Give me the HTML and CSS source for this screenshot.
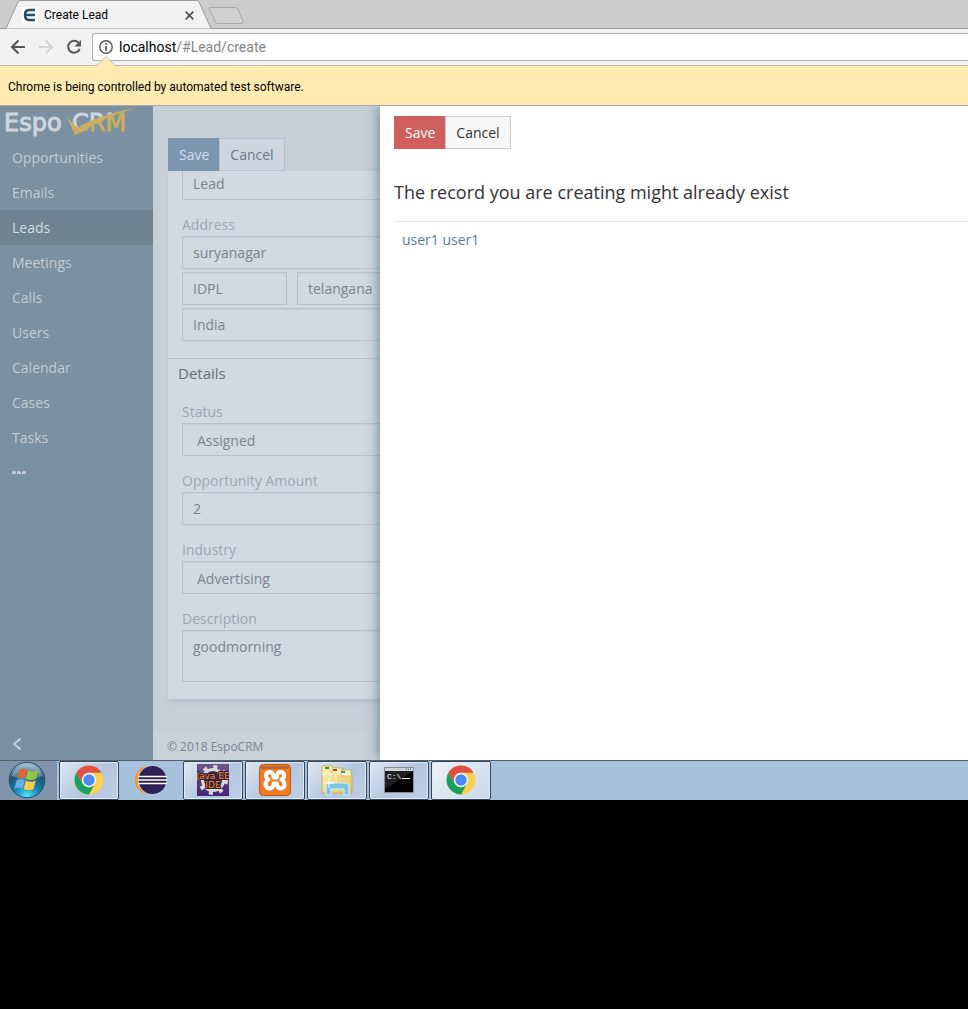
FILE: index.html
```html
<!DOCTYPE html>
<html lang="en">
<head>
<meta charset="utf-8">
<title>Create Lead</title>
<link rel="stylesheet" href="styles.css">
</head>
<body>
<svg class="defs" width="0" height="0" aria-hidden="true">
  <defs>
    <radialGradient id="orb" cx=".5" cy=".95" r=".95"><stop offset="0" stop-color="#4de5fa"/><stop offset=".35" stop-color="#1687b8"/><stop offset=".7" stop-color="#225071"/><stop offset="1" stop-color="#a9c2d4"/></radialGradient>
    <linearGradient id="folder" x1="0" y1="0" x2="1" y2="1"><stop offset="0" stop-color="#fff4bd"/><stop offset="1" stop-color="#e2c05c"/></linearGradient>
    <linearGradient id="purple" x1="0" y1="0" x2="0" y2="1"><stop offset="0" stop-color="#6e5585"/><stop offset="1" stop-color="#432777"/></linearGradient>
    <clipPath id="above-check"><path d="M72 0H132V1Q100 10 78 22L72 18Z"/></clipPath>
    <clipPath id="below-check"><path d="M82 26Q102 11 132 2V32H82Z"/></clipPath>
    <symbol id="chrome" viewBox="0 0 30 30">
      <circle cx="15" cy="15" r="14.5" fill="#fdd150"/>
      <path d="M2.4 7.8A14.5 14.5 0 0 1 27.6 7.8H15A7.2 7.2 0 0 0 8.8 18.6Z" fill="#df5144"/>
      <path d="M2.4 7.8A14.5 14.5 0 0 0 15 29.5L21.2 18.6A7.2 7.2 0 0 1 8.8 18.6Z" fill="#1ba05f"/>
      <circle cx="15" cy="15" r="7.2" fill="#f4f6f9"/><circle cx="15" cy="15" r="5.7" fill="#4a89f3"/>
    </symbol>
  </defs>
</svg>

<div class="browser">
  <div class="tabs">
    <svg class="tab-shape" width="250" height="29" viewBox="0 0 250 29" aria-hidden="true">
      <path d="M0 28.5H6L18 2Q19 .5 21 .5H196Q198 .5 199 2L211 28.5H250" fill="#f2f2f2" stroke="#9b9b9b"/>
      <path d="M210 7.500H235Q237 7.500 238 9L243 21Q244 23.500 241 23.500H218Q216 23.500 215 21L209 9Q208.500 7.500 210 7.500Z" fill="#d0d0d0" stroke="#a5a5a5"/>
    </svg>
    <div class="tab">
      <svg width="16" height="16" viewBox="0 0 16 16" aria-hidden="true"><path fill="#fff" d="M0 0h16v16H0z"/><path d="M13 3H7Q3 3 3 8T7 13H13M4 8H13" fill="none" stroke="#234e70" stroke-width="2.500"/></svg>
      <span class="tab-title">Create Lead</span>
      <button class="plain" aria-label="Close tab"><svg width="9" height="9" viewBox="0 0 9 9"><path d="M.7.7l7.600 7.600M8.300.7L.7 8.300" stroke="#505050" stroke-width="1.700"/></svg></button>
    </div>
  </div>
  <div class="toolbar">
    <button class="plain" aria-label="Back"><svg width="16" height="16" viewBox="0 0 16 16"><path d="M15 8H2M8.500 1.500L2 8l6.500 6.500" fill="none" stroke="#555" stroke-width="2"/></svg></button>
    <button class="plain" aria-label="Forward"><svg width="16" height="16" viewBox="0 0 16 16"><path d="M1 8h13M7.500 1.500L14 8l-6.500 6.500" fill="none" stroke="#d3d3d3" stroke-width="2"/></svg></button>
    <button class="plain" aria-label="Reload"><svg width="16" height="16" viewBox="0 0 16 16"><path d="M12.600 3.700A6 6 0 1 0 13.700 10" fill="none" stroke="#555" stroke-width="2"/><path d="M15 1v6.500H8.500z" fill="#555"/></svg></button>
    <div class="address">
      <svg width="14" height="14" viewBox="0 0 14 14" aria-hidden="true"><circle cx="7" cy="7" r="6.200" fill="none" stroke="#555" stroke-width="1.400"/><path d="M7 6v5M7 3v1.800" stroke="#555" stroke-width="1.700"/></svg>
      <span>localhost<span class="path">/#Lead/create</span></span>
    </div>
  </div>
  <div class="infobar">
    <svg class="notch" width="20" height="11" viewBox="0 0 20 11" aria-hidden="true"><path d="M0 10.500L10 .5l10 10V11H0z" fill="#ffebb1"/><path d="M0 10.500L10 .5l10 10" fill="none" stroke="#c9bd9c"/></svg>
    Chrome is being controlled by automated test software.
  </div>

  <div class="app">
    <nav class="sidebar">
      <svg class="logo" width="130" height="32" viewBox="0 0 130 32" role="img" aria-label="EspoCRM">
        <text x="4" y="25" class="logo-text light">Espo</text>
        <g clip-path="url(#above-check)"><text x="72" y="25" class="logo-text light">CRM</text></g>
        <g clip-path="url(#below-check)"><text x="72" y="25" class="logo-text gold">CRM</text></g>
        <path d="M67 11L75 29L80 27Q102 12 135 2Q98 9 77 22Z" fill="#cbae60"/>
      </svg>
      <ul>
        <li><a href="#">Opportunities</a></li>
        <li><a href="#">Emails</a></li>
        <li><a href="#" class="active">Leads</a></li>
        <li><a href="#">Meetings</a></li>
        <li><a href="#">Calls</a></li>
        <li><a href="#">Users</a></li>
        <li><a href="#">Calendar</a></li>
        <li><a href="#">Cases</a></li>
        <li><a href="#">Tasks</a></li>
        <li><a href="#" aria-label="More"><svg width="14" height="4" viewBox="0 0 14 4"><path d="M1 0h2l1 1v2H0V1zM6 0h2l1 1v2H5V1zM11 0h2l1 1v2h-4V1z" fill="#c2ccd5"/></svg></a></li>
      </ul>
      <button class="plain collapse" aria-label="Collapse menu"><svg width="10" height="14" viewBox="0 0 10 14"><path d="M8.500 1.500L2 7l6.500 5.500" fill="none" stroke="#c7d1da" stroke-width="2"/></svg></button>
    </nav>

    <main class="main">
      <div class="buttons muted"><button class="save">Save</button><button class="cancel">Cancel</button></div>
      <form class="panel">
        <section class="fields scrolled">
          <div class="field"><input aria-label="Title" value="Lead"></div>
          <div class="field">
            <label for="street">Address</label>
            <div class="address-grid">
              <input id="street" class="wide" value="suryanagar">
              <input aria-label="City" value="IDPL">
              <input aria-label="State" value="telangana">
              <input aria-label="Postal code" value="">
              <input aria-label="Country" class="wide" value="India">
            </div>
          </div>
        </section>
        <section class="details">
          <h4>Details</h4>
          <div class="fields">
            <div class="field"><label for="status">Status</label><select id="status"><option>Assigned</option></select></div>
            <div class="field"><label for="amount">Opportunity Amount</label><input id="amount" value="2"></div>
            <div class="field"><label for="industry">Industry</label><select id="industry"><option>Advertising</option></select></div>
            <div class="field"><label for="description">Description</label><textarea id="description">goodmorning</textarea></div>
          </div>
        </section>
      </form>
      <footer>© 2018 EspoCRM</footer>
    </main>

    <div class="dialog" role="dialog" aria-labelledby="dialog-title">
      <div class="buttons"><button class="save">Save</button><button class="cancel">Cancel</button></div>
      <h3 id="dialog-title">The record you are creating might already exist</h3>
      <div class="record"><a href="#">user1 user1</a></div>
    </div>
  </div>
</div>

<div class="taskbar">
  <button class="start" aria-label="Start"><svg width="38" height="38" viewBox="0 0 38 38">
    <circle cx="19" cy="19" r="17.800" fill="url(#orb)" stroke="#1e4b6e"/>
    <path d="M4 15A15.500 15.500 0 0 1 34 15Q19 22 4 15Z" fill="#fff" opacity=".28"/>
    <path d="M11.500 9Q15 6.500 19 9L17 17.500Q13 15.500 9 17.500Z" fill="#e8622c"/><path d="M20 9.500Q25 12 30 9.500L28 18Q23 20 18 18Z" fill="#93c83e"/>
    <path d="M8.700 19Q13 17 16.700 19L14.700 27.500Q11 25.500 6.500 27.500Z" fill="#66aee6"/><path d="M17.700 19.500Q23 22 27.700 19.500L25.500 28Q21 30.500 15.700 28Z" fill="#fbcc46"/>
  </svg></button>
  <button class="task" aria-label="Chrome"><svg width="30" height="30"><use href="#chrome"/></svg></button>
  <button class="task flat" aria-label="Eclipse"><svg width="34" height="30" viewBox="0 0 34 30">
    <circle cx="15" cy="15" r="14" fill="#f7941e"/><circle cx="18" cy="15" r="14.500" fill="#c9cfe0"/><circle cx="18.500" cy="15" r="14" fill="#2c2255"/>
    <path d="M4 11.500h29M4 15h29M4 18.500h29" stroke="#fff" stroke-width="1.700"/>
  </svg></button>
  <button class="task" aria-label="Java EE IDE"><svg width="32" height="32" viewBox="0 0 32 32">
    <path fill="url(#purple)" d="M0 0h32v32H0z"/><circle cx="16" cy="16" r="13" fill="none" stroke="#d9d7d7" stroke-width="4" stroke-dasharray="4 6.200"/>
    <circle cx="16" cy="16" r="10.500" fill="#37284b" stroke="#d9d7d7" stroke-width="3"/>
    <text x="16" y="15" class="ide">Java EE</text><text x="16" y="24" class="ide">IDE</text>
  </svg></button>
  <button class="task" aria-label="XAMPP"><svg width="32" height="32" viewBox="0 0 32 32">
    <rect x=".5" y=".5" width="31" height="31" rx="4" fill="#f47a20" stroke="#b8571c"/><path d="M2 2h28v3H2z" fill="#b86838"/>
    <path d="M11 8Q7 8 7 11.500Q7 14.500 9.500 15.500Q6.500 17 6.500 20.500Q7 24.500 11 24.500Q14.500 24 14.500 19.500H18Q18 24.500 22 24.500Q25.500 24 25.500 20.500Q25.500 17 22.500 15.500Q25 14.500 25 11.500Q25 8 21 8M14.500 13.500H18Q18 8 21 8M11 8Q14.500 8.500 14.500 13.500" fill="none" stroke="#fff" stroke-width="4" stroke-linejoin="round" stroke-linecap="round"/>
  </svg></button>
  <button class="task" aria-label="Explorer"><svg width="34" height="32" viewBox="0 0 34 32">
    <path d="M2 4l1-2h9l1 2h10V8h8l1 2v19H2z" fill="url(#folder)" stroke="#cbb05b"/>
    <path d="M12 6l1-2h8l1 2v4H12zM21 8l1-2h8l1 2v4H21z" fill="#fff2b5" stroke="#cbb05b" stroke-width=".7"/>
    <path d="M5 3h4v2H5z" fill="#14a51b"/><path d="M13 5h4v2h-4z" fill="#d83e25"/><path d="M21 7h4v2h-4z" fill="#2693d2"/>
    <path d="M2 10h29M16 11v8" stroke="#fff7cf"/>
    <path d="M6 31v-9q0-3 4-3h15q4 0 4 3v9h-5v-6H11v6z" fill="#7dc3e5" stroke="#d6f1fd"/><path d="M9 14v10M4 19h10" stroke="#fff"/>
  </svg></button>
  <button class="task" aria-label="Command prompt"><svg width="30" height="26" viewBox="0 0 30 26">
    <path d="M.5.5h29v25H.5z" fill="#000" stroke="#8a8f96"/><path d="M1 1h28v3H1z" fill="#cfd4db"/><path d="M22 2h6" stroke="#555" stroke-dasharray="1 1"/>
    <path d="M1 4h28L1 22z" fill="#fff" opacity=".13"/><text x="3" y="12" class="prompt">C:\</text>
    <path d="M18 11.500h8" stroke="#fff"/>
  </svg></button>
  <button class="task bright" aria-label="Chrome, active window"><svg width="30" height="30"><use href="#chrome"/></svg></button>
</div>
</body>
</html>
```
FILE: styles.css
```css
* { box-sizing: border-box; }
body { margin: 0; background: #000; font: 14px/20px "Open Sans", sans-serif; }
button, input, select, textarea { font: inherit; margin: 0; border-radius: 0; }
a { text-decoration: none; }
svg { display: block; flex: none; }
.defs { position: absolute; }
.plain { border: 0; background: none; padding: 0; }

.browser { background: #f2f2f2; color: #000; overflow: hidden; }
.tabs { position: relative; height: 29px; background: #ccc; border-bottom: 1px solid #9b9b9b; font: 12px/16px Roboto, sans-serif; }
.tab-shape { position: absolute; left: 0; top: 0; }
.tab { position: relative; display: flex; align-items: center; gap: 6px; width: 194px; padding: 7px 0 0 22px; }
.tab-title { flex: 1; }
.toolbar { display: flex; align-items: center; gap: 12px; height: 37px; padding-left: 10px; border-bottom: 1px solid #bbb; }
.address { flex: 1; display: flex; align-items: center; gap: 6px; height: 28px; margin-left: -2px; padding-left: 6px; background: #fff; border: 1px solid #b0b0b0; border-right: 0; border-radius: 3px 0 0 3px; font: 14px/20px Roboto, sans-serif; }
.path { color: #858585; }
.infobar { position: relative; padding: 12px 8px 9px; background: #ffebb1; border-bottom: 1px solid #a4a9ab; font: 12px/18px Roboto, sans-serif; }
.notch { position: absolute; left: 96px; top: -10px; }

.app { position: relative; display: flex; background: #c7cfd9; }
.sidebar { width: 153px; display: flex; flex-direction: column; background: #7b90a0; }
.logo { overflow: visible; }
.logo-text { font: 24px "DejaVu Sans", sans-serif; stroke-width: 1px; }
.logo-text.light { fill: #ccd6e0; stroke: #ccd6e0; }
.logo-text.gold { fill: #cbae60; stroke: #cbae60; }
.sidebar ul { list-style: none; margin: 2px 0 0; padding: 0; }
.sidebar a { display: flex; align-items: center; height: 35px; padding-left: 12px; color: #c2ccd5; }
.sidebar a.active { background: #6e8290; color: #d3dbe2; }
.collapse { margin: auto 0 9px 12px; width: 10px; }

.main { flex: 1; padding-top: 32px; }
.main .buttons { margin-left: 15px; }
.buttons { display: flex; }
.buttons button { height: 33px; padding: 0 10px; border: 1px solid #ccc; background: #f7f7f7; color: #333; }
.buttons .save { background: #cf605d; border-color: #cf605d; color: #fff; }
.buttons .cancel { margin-left: -1px; }
.buttons.muted .save { background: #7b95af; border-color: #7b95af; color: #d5dee7; }
.buttons.muted .cancel { background: #cdd6e0; border-color: #b7c1cd; color: #6c7785; }
.panel { max-width: 363px; margin-left: 15px; overflow: hidden; background: #d1d9e2; box-shadow: 1px 3px 4px #b3bdc9; }
.fields { display: flex; flex-direction: column; gap: 15px; padding: 0 14px 17px; }
.scrolled .field:first-child { margin-top: -4px; }
.panel label { display: block; height: 21px; color: #9ba6b2; }
.panel input, .panel select, .panel textarea { display: block; width: 100%; height: 33px; padding: 0 10px; border: 1px solid #b5c2ce; background: #d1d9e2; color: #7b8490; outline: 0; box-shadow: inset 0 1px 1px #c6d0da; }
.panel select { appearance: none; padding: 2px 14px 0; }
.panel textarea { height: 52px; padding: 6px 10px; resize: none; }
.address-grid { display: grid; grid-template-columns: repeat(3, 1fr); gap: 3px 10px; }
.address-grid .wide { grid-column: 1 / -1; }
.details { border-top: 1px solid #b7c3ce; }
h4 { margin: 0; height: 43px; padding: 4px 10px; font-size: 15px; font-weight: 400; line-height: 20px; color: #65707d; }
footer { margin-top: 33px; padding: 5px 14px 3px; background: #c9d1da; font-size: 12px; color: #7c8692; }

.dialog { position: absolute; left: 380px; right: 0; top: 0; bottom: 0; padding: 10px 0 0 14px; background: #fff; box-shadow: 0 0 13px #61728a; clip-path: inset(0 0 0 -20px); }
h3 { margin: 32px 0 0; padding-bottom: 18px; border-bottom: 1px solid #e5e8e8; font-size: 18px; font-weight: 400; line-height: 22px; color: #333; }
.record { padding: 8px; }
.record a { color: #5a7d9c; }

.taskbar { display: flex; gap: 2px; height: 40px; background: #a7c0dc; border-top: 1px solid #53616f; }
.taskbar button { display: flex; align-items: center; justify-content: center; padding: 0 0 1px; border: 0; }
.taskbar .start { width: 57px; padding-right: 3px; background: #8093ab; }
.taskbar .task { width: 60px; border: 1px solid #35465a; border-radius: 2px; background: linear-gradient(135deg, #dee7f2, #b3c6df 55%, #bfd0e5); box-shadow: inset 0 0 0 1px #e0eaf4; }
.taskbar .flat { background: none; border-color: transparent; box-shadow: none; }
.taskbar .bright { background: linear-gradient(135deg, #edf3f9, #c8d7e9); }
.ide { font: 9px "DejaVu Sans", sans-serif; fill: #ff8a1c; stroke: #32203a; stroke-width: 2px; paint-order: stroke; text-anchor: middle; }
.prompt { font: 8px "Liberation Mono", monospace; fill: #fff; }
```
